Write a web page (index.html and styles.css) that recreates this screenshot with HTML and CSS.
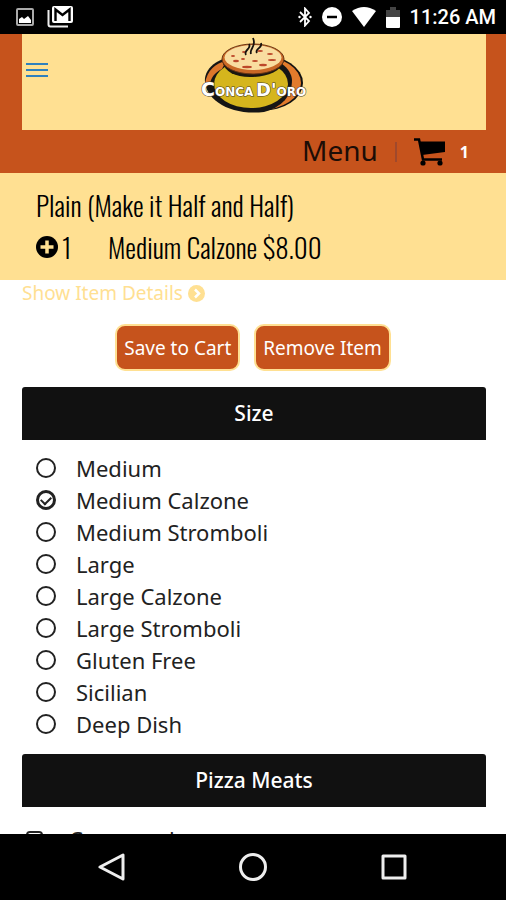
FILE: index.html
```html
<!DOCTYPE html>
<html lang="en">
  <head>
    <title>Conca D'oro</title>
    <meta charset="utf-8" />
    <meta name="viewport" content="width=device-width, initial-scale=1.0" />
    <link rel="stylesheet" href="styles.css">
  </head>

  <body>
    <div class="status-bar">
      <div class="status-left">
        <svg width="18" height="18" viewBox="0 0 18 18">
          <rect x="1" y="1" width="16" height="16" rx="1" fill="none" stroke="#aaa" stroke-width="2" />
          <path d="M3 15V11L6 9L8 11L12 8L15 12V15Z" fill="#fff" />
        </svg>
        <svg width="26" height="22" viewBox="0 0 26 22">
          <path d="M1.500 4V18.500a2 2 0 0 0 2 2H21" fill="none" stroke="#eee" stroke-width="2" />
          <rect x="5" y="0" width="21" height="17" rx="2" fill="#fff" />
          <path d="M8.500 15V3.500L15.500 9L22.500 3.500V15" fill="none" stroke="#000" stroke-width="2.400" />
        </svg>
      </div>
      <div class="status-right">
        <svg width="14" height="20" viewBox="0 0 14 20">
          <path d="M2 5L11 14L7 18.500V1.500L11 6L2 15" fill="none" stroke="#fff" stroke-width="1.800" />
          <circle cx="1.500" cy="10" r="1.200" fill="#fff" />
          <circle cx="12.500" cy="10" r="1.200" fill="#fff" />
        </svg>
        <svg width="20" height="20" viewBox="0 0 20 20">
          <circle cx="10" cy="10" r="10" fill="#fff" />
          <path d="M5 10H15" stroke="#000" stroke-width="2.500" />
        </svg>
        <svg width="24" height="20" viewBox="0 0 24 20">
          <path d="M0 4Q12 -4 24 4L12 20Z" fill="#fff" />
        </svg>
        <svg width="14" height="21" viewBox="0 0 14 21">
          <path d="M0 10V3H4V0H10V3H14V10Z" fill="#444" />
          <path d="M0 10H14V20a1 1 0 0 1-1 1H1a1 1 0 0 1-1-1Z" fill="#fff" />
        </svg>
        <span class="clock">11:26 AM</span>
      </div>
    </div>

    <header class="header">
      <div class="banner">
        <button class="menu-toggle" aria-label="Open menu">
          <span></span>
          <span></span>
          <span></span>
        </button>
        <svg class="logo" width="108" height="82" viewBox="0 -2 108 82">
          <ellipse cx="61" cy="47" rx="42" ry="28" fill="#111" />
          <ellipse cx="60" cy="47" rx="41" ry="27" fill="#e27b2c" />
          <path d="M5 42C7 28 24 19 48 19C76 19 91 31 92 44C92 60 82 71 64 76C28 80 3 62 5 42Z" fill="#151515" />
          <path d="M5 48C7 34 16 27 26 25L22 33C14 37 11 42 10 48Z" fill="#dc762b" />
          <ellipse cx="51" cy="48" rx="37" ry="24" fill="#d5b51d" />
          <path d="M22 25C25 36 35 41 50 41C66 41 81 36 84 25Z" fill="#1b1710" />
          <ellipse cx="53" cy="23" rx="31" ry="15" fill="#c96825" stroke="#6b3514" stroke-width="1" />
          <ellipse cx="53" cy="21.500" rx="28.500" ry="12.500" fill="#f9dda0" />
          <g fill="#bd482a">
            <ellipse cx="33" cy="20" rx="2" ry="1" />
            <ellipse cx="36" cy="25" rx="3" ry="1.300" />
            <ellipse cx="44" cy="16" rx="2" ry="1" />
            <ellipse cx="47" cy="31" rx="5" ry="1.200" />
            <ellipse cx="55" cy="25" rx="3" ry="1" />
            <ellipse cx="63" cy="29" rx="4" ry="1.300" />
            <ellipse cx="72" cy="24" rx="4" ry="1" />
            <ellipse cx="70" cy="18" rx="3" ry="1" />
            <ellipse cx="43" cy="23" rx="2" ry="1" />
            <ellipse cx="60" cy="15" rx="3" ry="1" />
          </g>
          <g fill="none" stroke="#17120e" stroke-width="1.800">
            <path d="M46 19C43 14 52 13 49 8" />
            <path d="M51 18C49 12 57 11 53 2" />
            <path d="M57 17C54 13 63 12 61 7" />
          </g>
          <g class="logo-text">
            <text x="1" y="60"><tspan font-size="19">C</tspan><tspan font-size="12">ONCA</tspan></text>
            <text x="56" y="60"><tspan font-size="18">D'</tspan><tspan font-size="12">ORO</tspan></text>
          </g>
        </svg>
      </div>
      <nav class="nav">
        <a href="#" class="nav-menu">Menu</a>
        <span class="nav-divider"></span>
        <a href="#" class="nav-cart">
          <svg width="32" height="28" viewBox="0 0 32 28">
            <path d="M0 1.500H5L9 21.500H28" fill="none" stroke="#000" stroke-width="2.500" />
            <path d="M5 3.500H31V14L8 17Z" fill="#000" />
            <circle cx="9" cy="25" r="2.600" fill="#000" />
            <circle cx="26" cy="25" r="2.600" fill="#000" />
          </svg>
          <span class="cart-count">1</span>
        </a>
      </nav>
    </header>

    <main class="content">
      <section class="item">
        <h1 class="item-line">Plain (Make it Half and Half)</h1>
        <div class="item-line">
          <svg width="22" height="22" viewBox="0 0 22 22">
            <circle cx="11" cy="11" r="11" fill="#000" />
            <path d="M11 4.500V17.500M4.500 11H17.500" stroke="#ffe092" stroke-width="3.500" />
          </svg>
          <span class="quantity">1</span>
          <span>Medium Calzone $8.00</span>
        </div>
      </section>

      <a href="#" class="details-link">
        Show Item Details
        <svg width="17" height="17" viewBox="0 0 17 17">
          <circle cx="8.500" cy="8.500" r="8.500" fill="#ffe092" />
          <path d="M7 4.500L11 8.500L7 12.500" fill="none" stroke="#fff" stroke-width="2.500" />
        </svg>
      </a>

      <div class="actions">
        <button class="btn">Save to Cart</button>
        <button class="btn">Remove Item</button>
      </div>

      <section class="group">
        <h2 class="group-title">Size</h2>
        <div class="options">
          <label class="option"><input type="radio" name="size" />Medium</label>
          <label class="option"><input type="radio" name="size" checked />Medium Calzone</label>
          <label class="option"><input type="radio" name="size" />Medium Stromboli</label>
          <label class="option"><input type="radio" name="size" />Large</label>
          <label class="option"><input type="radio" name="size" />Large Calzone</label>
          <label class="option"><input type="radio" name="size" />Large Stromboli</label>
          <label class="option"><input type="radio" name="size" />Gluten Free</label>
          <label class="option"><input type="radio" name="size" />Sicilian</label>
          <label class="option"><input type="radio" name="size" />Deep Dish</label>
        </div>
      </section>

      <section class="group">
        <h2 class="group-title">Pizza Meats</h2>
        <div class="options toppings">
          <label class="option"><input type="checkbox" />Cappaccola</label>
        </div>
      </section>
    </main>

    <div class="system-nav">
      <button aria-label="Back">
        <svg width="28" height="28" viewBox="0 0 28 28">
          <path d="M25 2V26L2 14Z" />
        </svg>
      </button>
      <button aria-label="Home">
        <svg width="28" height="28" viewBox="0 0 28 28">
          <circle cx="14" cy="14" r="12.500" />
        </svg>
      </button>
      <button aria-label="Recent apps">
        <svg width="28" height="28" viewBox="0 0 28 28">
          <rect x="3" y="3" width="22" height="22" />
        </svg>
      </button>
    </div>
  </body>
</html>
```

FILE: styles.css
```css
* {
  box-sizing: border-box;
}

body {
  display: flex;
  flex-direction: column;
  height: 100vh;
  margin: 0;
  overflow: hidden;
  font-family: "Noto Sans", "Open Sans", sans-serif;
  color: #222;
  background-color: #fff;
}

a {
  color: inherit;
  text-decoration: none;
}

button {
  padding: 0;
  border: none;
  background: none;
  font-family: inherit;
  cursor: pointer;
}

svg {
  display: block;
  flex-shrink: 0;
}

.status-bar {
  display: flex;
  justify-content: space-between;
  align-items: center;
  flex-shrink: 0;
  height: 34px;
  padding: 0 10px 0 16px;
  background-color: #000;
  color: #fff;
}

.status-left {
  display: flex;
  align-items: center;
  gap: 13px;
}

.status-right {
  display: flex;
  align-items: center;
  gap: 10px;
}

.clock {
  font-family: Roboto, sans-serif;
  font-size: 20px;
  font-weight: 500;
}

.header {
  flex-shrink: 0;
  padding: 0 20px 0 22px;
  background-color: #c6531c;
}

.banner {
  display: grid;
  grid-template-columns: 1fr auto 1fr;
  height: 96px;
  padding: 0 4px;
  background-color: #ffe092;
}

.menu-toggle {
  display: flex;
  flex-direction: column;
  gap: 4px;
  width: 22px;
  margin-top: 29px;
  align-self: start;
}

.menu-toggle span {
  width: 100%;
  height: 2px;
  background-color: #2f80bd;
}

.logo-text {
  font-family: "DejaVu Sans", sans-serif;
  font-weight: bold;
  fill: #fff;
  stroke: #443c2c;
  stroke-width: 1px;
  paint-order: stroke;
}

.nav {
  display: flex;
  justify-content: flex-end;
  align-items: center;
  height: 43px;
  padding-right: 17px;
  color: #1c0d06;
}

.nav-menu {
  font-size: 28px;
  line-height: 38px;
  margin-bottom: 4px;
}

.nav-divider {
  width: 2px;
  height: 20px;
  margin: 0 17px;
  background-color: #a0492c;
}

.nav-cart {
  display: flex;
  align-items: center;
  gap: 14px;
}

.cart-count {
  color: #fff;
  font-size: 16px;
  font-weight: bold;
}

.content {
  flex: 1;
  min-height: 0;
  overflow: hidden;
}

.item {
  padding: 11px 36px 12px;
  background-color: #ffe092;
}

.item-line {
  display: flex;
  align-items: center;
  height: 42px;
  margin: 0;
  font-family: Oswald, "Liberation Sans Narrow", sans-serif;
  font-size: 27px;
  font-weight: 300;
  color: #000;
}

.quantity {
  width: 50px;
  padding-left: 4px;
}

.details-link {
  display: flex;
  align-items: center;
  gap: 5px;
  padding: 0 22px;
  font-size: 19px;
  line-height: 26px;
  color: #ffe092;
}

.actions {
  display: flex;
  justify-content: center;
  gap: 14px;
  padding: 18px 22px 16px;
}

.btn {
  height: 47px;
  padding: 0 7px;
  border: 2px solid #ffe092;
  border-radius: 10px;
  background-color: #c6531c;
  color: #fff;
  font-size: 19px;
}

.group {
  padding: 0 20px 0 22px;
}

.group-title {
  margin: 0;
  border-radius: 3px 3px 0 0;
  background-color: #111;
  color: #fff;
  font-size: 21px;
  font-weight: 500;
  line-height: 53px;
  text-align: center;
}

.options {
  padding: 12px 14px 14px;
}

.option {
  display: flex;
  align-items: center;
  gap: 20px;
  font-size: 22px;
  line-height: 32px;
}

.option input {
  display: grid;
  place-items: center;
  flex-shrink: 0;
  width: 20px;
  height: 20px;
  margin: 0;
  border: 2px solid #222;
  border-radius: 50%;
  appearance: none;
}

.option input:checked {
  border-width: 3px;
}

.option input:checked::after {
  content: "";
  width: 8px;
  height: 5px;
  border: solid #222;
  border-width: 0 0 2px 2px;
  transform: translateY(-1px) rotate(-45deg);
}

.toppings {
  padding: 16px 4px;
}

.toppings .option {
  gap: 26px;
}

.toppings .option input {
  width: 17px;
  height: 17px;
  border-radius: 4px;
}

.system-nav {
  display: flex;
  justify-content: center;
  align-items: center;
  gap: 113px;
  flex-shrink: 0;
  height: 66px;
  background-color: #000;
}

.system-nav svg {
  fill: none;
  stroke: #eee;
  stroke-width: 3;
  stroke-linejoin: round;
}
```
